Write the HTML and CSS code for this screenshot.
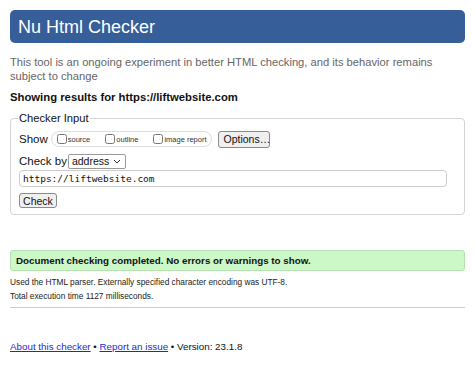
FILE: index.html
```html
<!DOCTYPE html>
<html lang="en">
<head>
    <meta charset="UTF-8">
    <meta name="viewport" content="width=device-width, initial-scale=1.0">
    <title>Nu Html Checker</title>
    <link rel="stylesheet" href="styles.css">
</head>

<body>
    <header>
        <h1>Nu Html Checker</h1>
    </header>

    <p class="intro">This tool is an ongoing experiment in better HTML checking, and its behavior remains subject to change</p>

    <p class="showing">Showing results for https://liftwebsite.com</p>

    <!-- Checker form -->
    <fieldset class="checker">
        <legend>Checker Input</legend>
        <div class="row row-show">
            <span class="label">Show</span>
            <span class="extra">
                <label><input type="checkbox"> source</label>
                <label><input type="checkbox"> outline</label>
                <label><input type="checkbox"> image report</label>
            </span>
            <button type="button" class="btn btn-options">Options…</button>
        </div>
        <div class="row row-by">
            <span class="label">Check by</span>
            <span class="select">
                address
                <svg width="8" height="5" viewBox="0 0 8 5"><path d="M1 1l3 3 3-3" fill="none" stroke="#333" stroke-width="1"/></svg>
            </span>
        </div>
        <input type="text" class="doc-url" value="https://liftwebsite.com">
        <button type="button" class="btn btn-check">Check</button>
    </fieldset>

    <!-- Results -->
    <div class="success">Document checking completed. No errors or warnings to show.</div>
    <p class="details">Used the HTML parser. Externally specified character encoding was UTF-8.</p>
    <p class="details details-time">Total execution time 1127 milliseconds.</p>
    <hr>

    <p class="footer"><a href="#">About this checker</a> • <a href="#">Report an issue</a> • Version: 23.1.8</p>
</body>
</html>
```

FILE: styles.css
```css
body {
    font-family: "Liberation Sans", Arial, sans-serif;
    margin: 0;
    padding: 10px 9px 10px 10px;
    color: #111;
    background: #fff;
}

header h1 {
    margin: 0;
    height: 33px;
    line-height: 34px;
    padding: 0 8px;
    font-size: 18px;
    font-weight: normal;
    color: #fff;
    background-color: #365e98;
    border-radius: 5px;
}

.intro {
    margin: 12px 0 0;
    font-size: 11.2px;
    line-height: 14px;
    color: #666;
}

.showing {
    margin: 7px 0 0;
    font-size: 11.3px;
    line-height: 14px;
    font-weight: bold;
}

.checker {
    margin: 7px 0 0;
    padding: 0 8px 6px;
    border: 1px solid #d4d4d4;
    border-radius: 4px;
}

.checker legend {
    padding: 0 1px;
    margin-left: -1px;
    font-size: 11.2px;
    line-height: 14px;
}

.row {
    display: flex;
    align-items: center;
}

.row-show {
    height: 18px;
    margin-top: 5px;
}

.row-by {
    height: 16px;
    margin-top: 5px;
}

.label {
    font-size: 11.5px;
    margin-right: 3px;
}

.extra {
    display: flex;
    align-items: center;
    height: 14px;
    padding: 0 4px 0 5px;
    border: 1px solid #ddd;
    border-radius: 8px;
    gap: 15px;
}

.extra label {
    display: flex;
    align-items: center;
    font-size: 7.5px;
    color: #333;
}

.extra input {
    width: 10px;
    height: 10px;
    margin: 0 1px 0 0;
}

.btn {
    font-family: "Liberation Sans", Arial, sans-serif;
    font-size: 10.5px;
    color: #111;
    background: #efefef;
    border: 1px solid #8a8a8a;
    border-radius: 3px;
    padding: 0 5px;
}

.btn-options {
    margin-left: 6px;
    height: 17px;
    width: 52px;
}

.select {
    display: flex;
    align-items: center;
    justify-content: space-between;
    box-sizing: border-box;
    width: 58px;
    height: 15px;
    margin-left: -2px;
    padding: 0 4px 0 3px;
    font-size: 10.5px;
    border: 1px solid #999;
    border-radius: 2px;
    background: #fff;
}

.doc-url {
    display: block;
    box-sizing: border-box;
    width: 428px;
    height: 17px;
    margin-top: 1px;
    padding: 0 3px;
    font-family: "DejaVu Sans Mono", monospace;
    font-size: 9.5px;
    color: #111;
    border: 1px solid #ccc;
    border-radius: 4px;
}

.btn-check {
    display: block;
    margin-top: 6px;
    height: 15px;
    width: 38px;
    padding: 0;
}

.success {
    box-sizing: border-box;
    margin-top: 35px;
    height: 21px;
    line-height: 19px;
    padding: 0 5px;
    font-size: 9.8px;
    font-weight: bold;
    background-color: #ccf7c7;
    border: 1px solid #b5e0b0;
    border-radius: 3px;
}

.details {
    margin: 6px 0 0;
    font-size: 8.3px;
    line-height: 11px;
    color: #222;
}

.details-time {
    margin-top: 3px;
}

hr {
    margin: 5px 0 0;
    border: none;
    border-top: 1px solid #ccc;
}

.footer {
    margin: 32px 0 0;
    font-size: 9.8px;
    line-height: 13px;
}

.footer a {
    color: #1a2bd0;
}
```
